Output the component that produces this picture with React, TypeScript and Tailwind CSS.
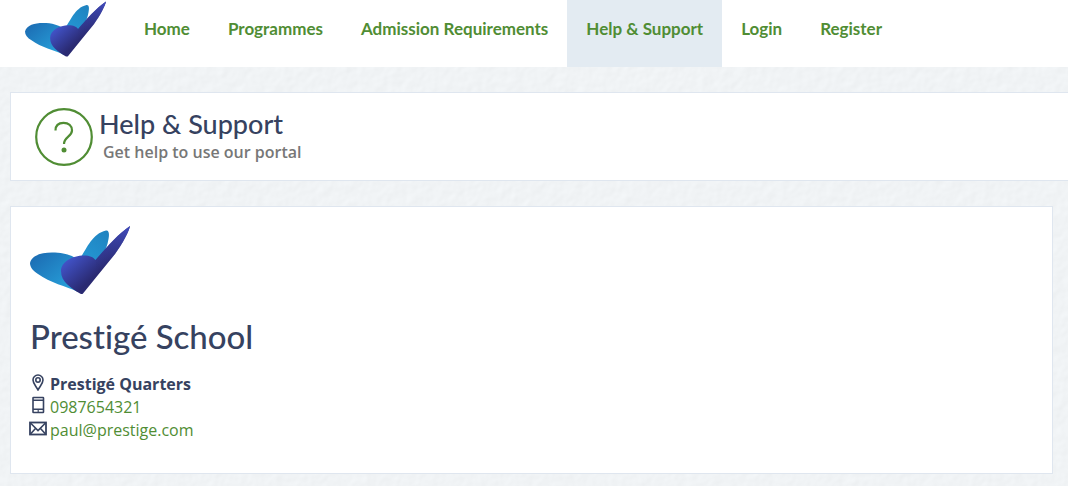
import { useId } from "react";
import type { ReactNode } from "react";

function Logo({ className }: { className: string }) {
  const id = useId();
  return (
    <svg viewBox="0 0 100 68" className={className} role="img" aria-label="Prestigé School">
      <defs>
        <linearGradient id={`${id}-wing`} x1="0" y1="0" x2="1" y2="1">
          <stop offset="0" stopColor="#1b68b0" />
          <stop offset="1" stopColor="#29a9e0" />
        </linearGradient>
        <linearGradient id={`${id}-tip`} x1="1" y1="0" x2="0.3" y2="1">
          <stop offset="0" stopColor="#1f82bf" />
          <stop offset="1" stopColor="#2496d3" />
        </linearGradient>
        <linearGradient id={`${id}-body`} gradientUnits="userSpaceOnUse" x1="38" y1="34" x2="58" y2="56">
          <stop offset="0" stopColor="#4152c6" />
          <stop offset="1" stopColor="#2a2a72" />
        </linearGradient>
        <linearGradient id={`${id}-blade`} gradientUnits="userSpaceOnUse" x1="98" y1="2" x2="62" y2="44">
          <stop offset="0" stopColor="#4049b8" />
          <stop offset="1" stopColor="#2a2a72" stopOpacity="0" />
        </linearGradient>
      </defs>
      <path d="M50 32C56 25 61 8 76 4.500C79 4 79.500 8 78.500 13C77 22 73 31 66 38Z" fill={`url(#${id}-tip)`} />
      <path d="M0 37C2 29 12 26.500 22 26.500C34 26.500 41 29 47 33L48 66C36 60 20 57 8 48C3 45 0 41 0 37Z" fill={`url(#${id}-wing)`} />
      <path
        d="M100 0C99 5 93 17 85 28L53 67.500Q52 68.500 50 67.500C41 62 31 56 31 45C31 36 42 29.500 54 29.500C60 29.500 63 31 65.500 34C75 23 88 8 100 0Z"
        fill={`url(#${id}-body)`}
      />
      <path d="M100 0C99 5 93 17 85 28L67 50L65.500 34C75 23 88 8 100 0Z" fill={`url(#${id}-blade)`} />
    </svg>
  );
}

function PaperTexture() {
  return (
    <svg aria-hidden="true" className="absolute inset-0 -z-10 h-full w-full">
      <filter id="paper" x="0" y="0" width="100%" height="100%" colorInterpolationFilters="sRGB">
        <feTurbulence type="fractalNoise" baseFrequency="0.1" numOctaves="2" seed="4" result="noise" />
        <feDiffuseLighting in="noise" surfaceScale="0.14" diffuseConstant="1.095" lightingColor="#f0f3f5">
          <feDistantLight azimuth="225" elevation="66" />
        </feDiffuseLighting>
      </filter>
      <rect width="100%" height="100%" filter="url(#paper)" />
    </svg>
  );
}

const links = ["Home", "Programmes", "Admission Requirements", "Help & Support", "Login", "Register"];

function ContactRow({ icon, children }: { icon: ReactNode; children: ReactNode }) {
  return (
    <li className="flex h-[23px] items-center gap-[3px]">
      <svg
        viewBox="0 0 18 18"
        className="-mt-1 size-[18px] shrink-0"
        fill="none"
        stroke="#364260"
        strokeWidth="1.600"
        aria-hidden="true"
      >
        {icon}
      </svg>
      {children}
    </li>
  );
}

export default function App() {
  return (
    <div className="relative isolate min-h-screen bg-[#f0f3f4] font-['Open_Sans',sans-serif] text-base text-[#364260]">
      <PaperTexture />
      <header className="flex h-[67px] items-start bg-white pl-[25px]">
        <a href="#home" className="mr-[19px] pt-px">
          <Logo className="h-[56px] w-[81px]" />
        </a>
        <nav className="flex self-stretch font-[Lato,sans-serif] text-[17px] leading-6 font-bold text-[#508d34]">
          {links.map((label) => (
            <a
              key={label}
              href="#"
              aria-current={label === "Help & Support" ? "page" : undefined}
              className="px-[19px] pt-[17px] whitespace-nowrap aria-[current=page]:bg-[#e3ebf2]"
            >
              {label}
            </a>
          ))}
        </nav>
      </header>

      <main className="pt-[25px] pb-3 pl-[10px]">
        <section className="flex h-[89px] items-start gap-[6px] border-y border-l border-[#dfe6ef] bg-white pt-[15px] pl-6">
          <svg viewBox="0 0 58 58" className="size-[58px]" fill="none" stroke="#508d34" strokeWidth="2.200" aria-hidden="true">
            <circle cx="29" cy="29" r="27.800" />
            <path d="M20.500 22.500C20.500 17 24 14.800 28.500 14.800C33.500 14.800 37 17.500 37 22.500C37 28.500 29 29 29 36" />
            <circle cx="29" cy="42" r="2.500" fill="#508d34" stroke="none" />
          </svg>
          <div>
            <h1 className="font-[Lato,sans-serif] text-[27px] leading-8 font-medium">Help &amp; Support</h1>
            <p className="pl-1 leading-6 font-semibold text-[#777777]">Get help to use our portal</p>
          </div>
        </section>

        <section className="mt-[25px] mr-[15px] h-[268px] border border-[#dfe6ef] bg-white pt-[19px] pl-[18px]">
          <Logo className="ml-px h-[68px] w-[100px]" />
          <h2 className="mt-[18px] mb-3 pl-px font-[Lato,sans-serif] text-[33px] leading-12 font-medium [font-variant-ligatures:none]">
            Prestigé School
          </h2>
          <ul>
            <ContactRow
              icon={
                <>
                  <path d="M9 17C7 13 4 10.500 4 7A5 5 0 0 1 14 7C14 10.500 11 13 9 17Z" />
                  <circle cx="9" cy="7" r="2.200" />
                </>
              }
            >
              <strong>Prestigé Quarters</strong>
            </ContactRow>
            <ContactRow
              icon={
                <>
                  <rect x="4" y="1.500" width="10.500" height="15" rx="0.500" />
                  <path d="M4 4.200H14.500M4 13.200H14.500M8.500 15H10" />
                </>
              }
            >
              <a href="tel:0987654321" className="text-[#508d34]">0987654321</a>
            </ContactRow>
            <ContactRow
              icon={
                <>
                  <rect x="1" y="3.500" width="16" height="12" strokeWidth="1.800" />
                  <path d="M1.500 4L9 11.500L16.500 4M1.500 15L6.500 9.500M16.500 15L11.500 9.500" />
                </>
              }
            >
              <a href="mailto:paul@prestige.com" className="text-[#508d34]">paul@prestige.com</a>
            </ContactRow>
          </ul>
        </section>
      </main>
    </div>
  );
}
